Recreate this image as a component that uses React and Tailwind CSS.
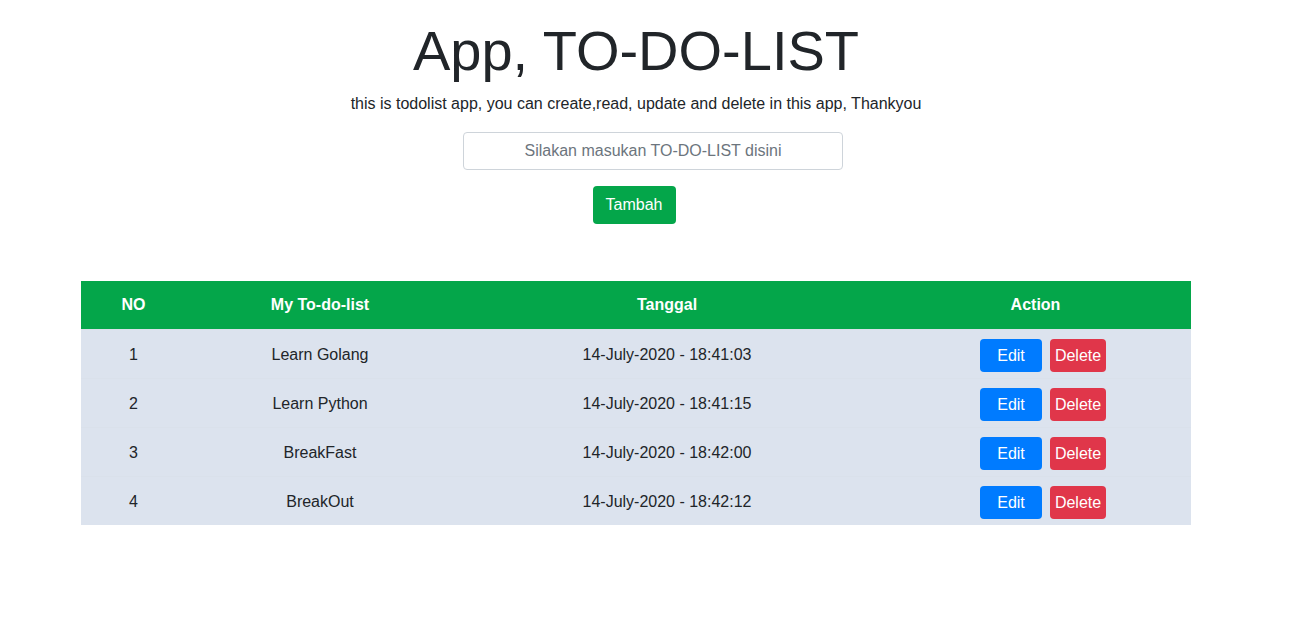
import React from "react";

const rows = [
  { no: 1, name: "Learn Golang", date: "14-July-2020 - 18:41:03" },
  { no: 2, name: "Learn Python", date: "14-July-2020 - 18:41:15" },
  { no: 3, name: "BreakFast", date: "14-July-2020 - 18:42:00" },
  { no: 4, name: "BreakOut", date: "14-July-2020 - 18:42:12" },
];

export default function App() {
  return (
    <div
      className="w-[1272px] min-h-[617px] bg-white text-[#212529] text-[16px]"
      style={{ fontFamily: '"Liberation Sans", Arial, sans-serif' }}
    >
      <div className="w-[1140px] mx-auto px-[15px]">
        <div className="flex flex-col items-center">
          <h1 className="mt-[17px] text-[56px] leading-[67px] font-light">App, TO-DO-LIST</h1>
          <p className="mt-[8px] leading-[24px]">
            this is todolist app, you can create,read, update and delete in this app, Thankyou
          </p>
        </div>
        <div className="mt-[16px] pl-[382px]">
          <input
            className="w-[380px] h-[38px] border border-[#ced4da] rounded-[4px] text-center text-[16px] placeholder:text-[#6c757d] outline-none"
            placeholder="Silakan masukan TO-DO-LIST disini"
          />
        </div>
        <div className="mt-[16px] flex justify-center pr-[4px]">
          <button className="w-[83px] h-[38px] bg-[#04a64a] text-white rounded-[4px] text-[16px]">
            Tambah
          </button>
        </div>
        <table className="mt-[57px] w-[1110px] border-collapse">
          <thead>
            <tr className="bg-[#04a64a] text-white h-[48px]">
              <th className="w-[105px] font-bold">NO</th>
              <th className="w-[268px] font-bold">My To-do-list</th>
              <th className="w-[426px] font-bold">Tanggal</th>
              <th className="font-bold">Action</th>
            </tr>
          </thead>
          <tbody>
            {rows.map((r) => (
              <tr key={r.no} className="bg-[#dce3ee] h-[49px] border-t border-[#dae1eb]">
                <td className="text-center pt-[3px]">{r.no}</td>
                <td className="text-center pt-[3px]">{r.name}</td>
                <td className="text-center pt-[3px]">{r.date}</td>
                <td>
                  <div className="flex justify-center gap-[8px] pl-[15px] pt-[4px]">
                    <button className="w-[62px] h-[33px] bg-[#007bff] text-white rounded-[4px] text-[16px]">
                      Edit
                    </button>
                    <button className="w-[56px] h-[33px] bg-[#e0364a] text-white rounded-[4px] text-[16px]">
                      Delete
                    </button>
                  </div>
                </td>
              </tr>
            ))}
          </tbody>
        </table>
      </div>
    </div>
  );
}
